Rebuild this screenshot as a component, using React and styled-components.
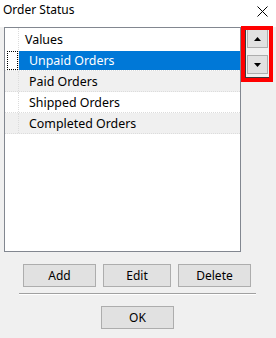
import React from 'react'
import styled, { createGlobalStyle } from 'styled-components'

const GlobalStyle = createGlobalStyle`
  body {
    margin: 0;
    background: #f0f0f0;
    font-family: "Noto Sans", "Liberation Sans", sans-serif;
    font-size: 12px;
    color: #000;
  }
`

const Window = styled.div`
  position: relative;
  width: 276px;
  height: 338px;
  display: flex;
  flex-direction: column;
  background: #f0f0f0;
  overflow: hidden;
`

const TitleBar = styled.div`
  height: 27px;
  background: #fff;
  display: flex;
  align-items: flex-start;
  justify-content: space-between;
  padding: 1px 8px 0 3px;
  box-sizing: border-box;
`

const Title = styled.span`
  font-size: 12px;
  line-height: 18px;
`

const CloseIcon = styled.svg`
  margin-top: 5px;
`

const Body = styled.div`
  display: flex;
  flex-direction: column;
  padding-left: 4px;
`

const TopArea = styled.div`
  display: flex;
`

const ListBox = styled.div`
  width: 237px;
  height: 225px;
  box-sizing: border-box;
  border: 1px solid #828790;
  background: #fff;
  display: flex;
  flex-direction: column;
`

const Row = styled.div`
  display: flex;
  height: ${p => p.$height}px;
  background: ${p => (p.$alt ? '#f0f0f0' : '#fff')};
  border-bottom: 1px dotted ${p => (p.$header ? 'transparent' : '#dcdcdc')};
  box-sizing: border-box;
`

const RowHead = styled.div`
  width: 14px;
  flex-shrink: 0;
  border-right: 1px dotted #dcdcdc;
  box-sizing: border-box;
  background: ${p => (p.$header ? '#fff' : 'inherit')};
  position: relative;
`

const FocusMark = styled.div`
  position: absolute;
  left: 2px;
  top: 0;
  width: 11px;
  height: 19px;
  box-sizing: border-box;
  border: 1px dotted #000;
`

const Cell = styled.div`
  flex: 1;
  display: flex;
  align-items: center;
  padding-left: ${p => (p.$header ? 6 : 10)}px;
  font-size: 12.4px;
  background: ${p => (p.$selected ? '#0078d7' : 'transparent')};
  color: ${p => (p.$selected ? '#fff' : '#000')};
`

const SideButtons = styled.div`
  display: flex;
  flex-direction: column;
  gap: 7px;
  margin-left: 6px;
  margin-top: 2px;
`

const ArrowButton = styled.div`
  width: 21px;
  height: 19px;
  box-sizing: border-box;
  border: 1px solid #adadad;
  background: #e1e1e1;
  display: flex;
  align-items: center;
  justify-content: center;
`

const ButtonRow = styled.div`
  display: flex;
  gap: 7px;
  margin-top: 12px;
  padding-left: 19px;
`

const Button = styled.div`
  width: ${p => p.$width}px;
  height: 23px;
  box-sizing: border-box;
  border: 1px solid #adadad;
  background: #e1e1e1;
  display: flex;
  align-items: center;
  justify-content: center;
  font-size: 12px;
`

const Separator = styled.div`
  margin: 6px 0 0 15px;
  width: 237px;
  height: 1px;
  background: #a0a0a0;
  border-bottom: 1px solid #fff;
`

const OkRow = styled.div`
  display: flex;
  margin-top: 11px;
  padding-left: 97px;
`

const Highlight = styled.div`
  position: absolute;
  left: 241px;
  top: 26px;
  width: 32px;
  height: 56px;
  box-sizing: border-box;
  border: 4px solid #f00;
  box-shadow: inset 1px -1px 0 #3a3a3a;
  pointer-events: none;
`

const rows = ['Unpaid Orders', 'Paid Orders', 'Shipped Orders', 'Completed Orders']

export default function App () {
  return (
    <Window>
      <GlobalStyle />
      <TitleBar>
        <Title>Order Status</Title>
        <CloseIcon width="11" height="11" viewBox="0 0 11 11">
          <path d="M0.5 0.5 L10.5 10.5 M10.5 0.5 L0.5 10.5" stroke="#000" strokeWidth="1" />
        </CloseIcon>
      </TitleBar>
      <Body>
        <TopArea>
          <ListBox>
            <Row $header $height={23}>
              <RowHead $header />
              <Cell $header>Values</Cell>
            </Row>
            {rows.map((name, i) => (
              <Row key={name} $alt={i % 2 === 1} $height={i === 0 ? 20 : 21}>
                <RowHead>{i === 0 ? <FocusMark /> : null}</RowHead>
                <Cell $selected={i === 0}>{name}</Cell>
              </Row>
            ))}
          </ListBox>
          <SideButtons>
            <ArrowButton>
              <svg width="7" height="4" viewBox="0 0 7 4"><path d="M3.5 0 L7 4 L0 4 Z" fill="#000" /></svg>
            </ArrowButton>
            <ArrowButton>
              <svg width="7" height="4" viewBox="0 0 7 4"><path d="M0 0 L7 0 L3.5 4 Z" fill="#000" /></svg>
            </ArrowButton>
          </SideButtons>
        </TopArea>
        <ButtonRow>
          <Button $width={73}>Add</Button>
          <Button $width={68}>Edit</Button>
          <Button $width={73}>Delete</Button>
        </ButtonRow>
        <Separator />
        <OkRow>
          <Button $width={73}>OK</Button>
        </OkRow>
      </Body>
      <Highlight />
    </Window>
  )
}
